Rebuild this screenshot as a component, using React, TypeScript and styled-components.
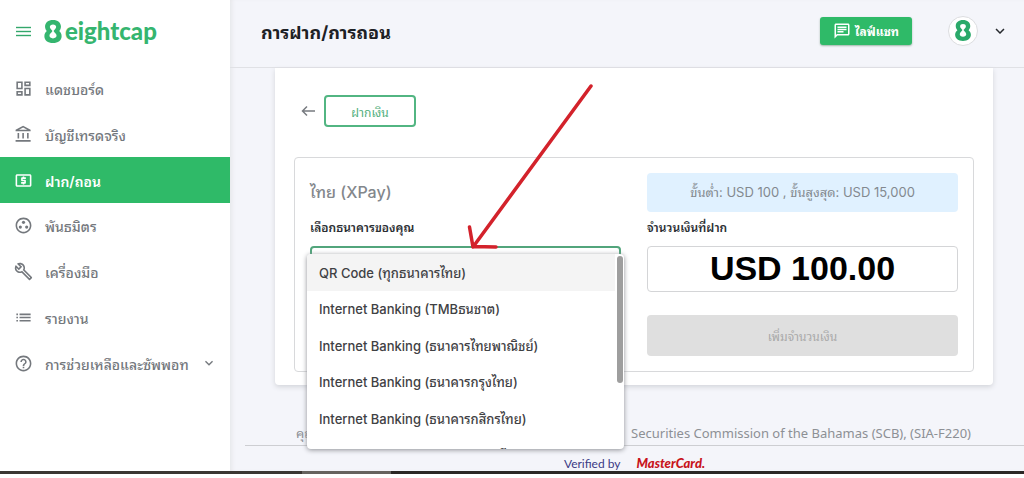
import React from "react";
import styled, { createGlobalStyle } from "styled-components";
import {
  MdKeyboardArrowDown,
  MdOutlineAccountBalance,
  MdOutlineBuild,
  MdOutlineChat,
  MdOutlineDashboard,
  MdOutlineGroupWork,
  MdOutlineHelpOutline,
  MdOutlineList,
  MdOutlineLocalAtm,
} from "react-icons/md";

const green = "#2fba68";
const thai = `"Noto Sans Thai Looped", Tahoma, Waree, Loma, Garuda, "Noto Sans Thai"`;
const sans = `Inter, ${thai}, "Noto Sans", sans-serif`;

const GlobalStyle = createGlobalStyle`
  * { box-sizing: border-box; }
  body { margin: 0; background: #fff; font-family: ${sans}; font-size: 13px; color: #2b2f33; }
  button, input, select { font-family: inherit; }
  h1, h2, p, ul { margin: 0; padding: 0; }
  ul { list-style: none; }
`;

const Page = styled.div`
  display: flex;
  flex-direction: column;
  height: 100vh;
  padding-bottom: 4px;
`;

const Shell = styled.div`
  flex: 1;
  min-height: 0;
  display: grid;
  grid-template-columns: 230px minmax(0, 1fr);
  overflow: hidden;
`;

const ScreenEdge = styled.div`
  height: 3px;
  background: linear-gradient(90deg, #3b3733 0 302px, #66635f 302px 391px, #2b2725 391px);
`;

const Sidebar = styled.aside`
  background: #fff;
`;

const Brand = styled.div`
  display: flex;
  align-items: center;
  height: 66px;
  padding: 0 0 4px 16px;
  gap: 13px;
`;

const IconButton = styled.button<{ $color: string }>`
  display: flex;
  align-items: center;
  justify-content: center;
  padding: 0;
  border: 0;
  background: none;
  color: ${(p) => p.$color};
  cursor: pointer;
`;

const Logo = styled.a`
  display: flex;
  align-items: center;
  gap: 3px;
  color: #35b56f;
  font: 900 24px/26px Lato, sans-serif;
  text-decoration: none;
`;

const Nav = styled.nav`
  display: grid;
  grid-auto-rows: 1fr;
  height: 320px;
`;

const NavItem = styled.a<{ $active?: boolean }>`
  display: flex;
  align-items: center;
  gap: 12px;
  padding-left: 14px;
  font-size: 14px;
  font-weight: ${(p) => (p.$active ? 600 : 500)};
  text-decoration: none;
  color: ${(p) => (p.$active ? "#fff" : "#74787d")};
  background: ${(p) => (p.$active ? green : "transparent")};
`;

const Main = styled.main`
  background: #f4f5fa;
  box-shadow: inset 4px 0 4px -2px #e6e7ea;
`;

const Header = styled.header`
  display: flex;
  align-items: center;
  height: 68px;
  padding: 0 15px 6px 31px;
  border-bottom: 1px solid #e0e1e5;
`;

const Title = styled.h1`
  flex: 1;
  font-size: 18px;
  font-weight: 700;
  color: #1d2125;
`;

const ChatButton = styled.button`
  display: flex;
  align-items: center;
  justify-content: center;
  gap: 4px;
  width: 92px;
  height: 28px;
  padding: 0;
  border: 0;
  border-radius: 3px;
  background: ${green};
  box-shadow: 0 1px 2px #9fb5a8;
  color: #fff;
  font-size: 12px;
  font-weight: 700;
`;

const Avatar = styled.span`
  display: flex;
  align-items: center;
  justify-content: center;
  width: 30px;
  height: 30px;
  margin: 0 13px 0 36px;
  border: 1px solid #dcdde0;
  border-radius: 50%;
  background: #fff;
  color: #2aa96a;
`;

const Card = styled.section`
  position: relative;
  margin: 0 31px 0 45px;
  padding: 27px 19px 13px;
  background: #fff;
  border-radius: 0 0 4px 4px;
  box-shadow: 0 2px 5px #d3d5da;
`;

const BackRow = styled.div`
  display: flex;
  align-items: center;
  gap: 8px;
  padding-left: 7px;
  margin-bottom: 30px;
`;

const DepositTab = styled.button`
  width: 92px;
  height: 32px;
  padding: 0;
  border: 2px solid #52b582;
  border-radius: 4px;
  background: #fff;
  color: #4fae7c;
  font-size: 12px;
`;

const Panel = styled.form`
  display: grid;
  grid-template-columns: 1fr 1fr;
  gap: 26px;
  padding: 15px;
  border: 1px solid #d8d9db;
  border-radius: 4px;
`;

const Column = styled.div`
  position: relative;
  display: flex;
  flex-direction: column;
`;

const Method = styled.h2`
  height: 39px;
  line-height: 39px;
  font-size: 16px;
  font-weight: 500;
  color: #83878c;
`;

const Limits = styled.p`
  height: 39px;
  line-height: 39px;
  border-radius: 4px;
  background: #e0f1ff;
  color: #83898f;
  font-size: 13px;
  text-align: center;
`;

const Label = styled.label`
  height: 34px;
  line-height: 32px;
  font-size: 12px;
  font-weight: 600;
`;

const BankSelect = styled.select`
  appearance: none;
  width: 100%;
  height: 46px;
  padding: 0 12px;
  border: 2px solid #52a57c;
  border-radius: 4px;
  background: #fff;
`;

const Amount = styled.input`
  width: 100%;
  height: 46px;
  padding: 0 0 2px;
  border: 1px solid #d4d5d7;
  border-radius: 4px;
  background: #fff;
  color: #000;
  text-align: center;
  && { font: 700 34px/42px "Liberation Sans", Arial, sans-serif; }
`;

const Submit = styled.button`
  height: 41px;
  margin-top: 23px;
  padding: 0;
  border: 0;
  border-radius: 4px;
  background: #dfdfdf;
  color: #a9a9a9;
  font-size: 12px;
`;

const Menu = styled.div`
  position: absolute;
  top: 81px;
  left: -3px;
  right: -3px;
  height: 195px;
  overflow: hidden;
  border-radius: 4px;
  background: #fff;
  box-shadow: 0 1px 5px #8d8f94;
`;

const Options = styled.ul`
  display: grid;
  grid-auto-rows: 1fr;
  height: 219px;
`;

const Option = styled.li`
  display: flex;
  align-items: center;
  padding-left: 12px;
  margin-right: 9px;
  font-weight: 500;
  color: #3f4144;

  &[aria-selected="true"] {
    background: #f4f4f4;
  }
`;

const Thumb = styled.span`
  position: absolute;
  top: 2px;
  right: 1px;
  width: 6px;
  height: 127px;
  border-radius: 3px;
  background: #9e9e9e;
`;

const Pointer = styled.svg`
  position: absolute;
  top: 12px;
  left: 190px;
  pointer-events: none;
`;

const Footer = styled.footer`
  margin-left: 15px;
  padding-top: 39px;
`;

const Notice = styled.p`
  display: flex;
  justify-content: space-between;
  height: 22px;
  padding: 0 53px 0 51px;
  font-family: "Noto Sans", ${thai}, sans-serif;
  line-height: 18px;
  white-space: nowrap;
  color: #8d9095;
  border-bottom: 1px solid #cdced2;
`;

const Badges = styled.div`
  display: flex;
  justify-content: center;
  gap: 16px;
  padding-top: 10px;
  line-height: 15px;
`;

const Verified = styled.span`
  color: #3b3a85;
  font-family: Lato, sans-serif;
  font-size: 12px;
`;

const MasterCard = styled.span`
  color: #c8141c;
  font: italic 900 13px/15px Lato, sans-serif;
`;

const EightMark = ({ width, height }: { width: number; height: number }) => (
  <svg width={width} height={height} viewBox="0 0 18 24" aria-hidden="true">
    <path
      fill="currentColor"
      fillRule="evenodd"
      d="M9 0C4 0 .7 2.800.7 6.800c0 2 .7 3.600 1.900 4.800C.9 12.900 0 14.700 0 16.900 0 21.200 3.600 24 9 24s9-2.800 9-7.100c0-2.200-.9-4-2.600-5.300 1.200-1.200 1.900-2.800 1.900-4.800C17.300 2.800 14 0 9 0Zm0 4.600c1.900 0 3.300 1 3.300 2.700 0 1.600-1.800 2.500-2.700 4.200.9 1.900 3.100 2.900 3.100 4.800 0 1.800-1.500 2.900-3.700 2.900s-3.700-1.100-3.700-2.900c0-1.900 2.200-2.900 3.100-4.800-.9-1.700-2.700-2.600-2.700-4.200 0-1.700 1.400-2.700 3.300-2.700Z"
    />
  </svg>
);

const navItems = [
  { label: "แดชบอร์ด", Icon: MdOutlineDashboard },
  { label: "บัญชีเทรดจริง", Icon: MdOutlineAccountBalance },
  { label: "ฝาก/ถอน", Icon: MdOutlineLocalAtm, active: true },
  { label: "พันธมิตร", Icon: MdOutlineGroupWork },
  { label: "เครื่องมือ", Icon: MdOutlineBuild },
  { label: "รายงาน", Icon: MdOutlineList },
  { label: "การช่วยเหลือและซัพพอท", Icon: MdOutlineHelpOutline, expandable: true },
];

const banks = [
  "QR Code (ทุกธนาคารไทย)",
  "Internet Banking (TMBธนชาต)",
  "Internet Banking (ธนาคารไทยพาณิชย์)",
  "Internet Banking (ธนาคารกรุงไทย)",
  "Internet Banking (ธนาคารกสิกรไทย)",
  "Internet Banking (ธนาคารกรุงศรี)",
];

export default function App() {
  return (
    <>
      <GlobalStyle />
      <Page>
        <Shell>
          <Sidebar>
            <Brand>
              <IconButton type="button" $color="#35a76b" aria-label="Menu">
                <svg width="15" height="11" viewBox="0 0 15 11" fill="currentColor">
                  <path d="M0 1h15v1H0zM0 5h15v1H0zM0 9h15v1H0z" stroke="currentColor" strokeWidth=".4" />
                </svg>
              </IconButton>
              <Logo href="#">
                <EightMark width={18} height={23} />
                eightcap
              </Logo>
            </Brand>
            <Nav>
              {navItems.map(({ label, Icon, active, expandable }) => (
                <NavItem key={label} href="#" $active={active}>
                  <Icon size={19} />
                  {label}
                  {expandable && <MdKeyboardArrowDown size={16} />}
                </NavItem>
              ))}
            </Nav>
          </Sidebar>
          <Main>
            <Header>
              <Title>การฝาก/การถอน</Title>
              <ChatButton type="button">
                <MdOutlineChat size={18} />
                ไลฟ์แชท
              </ChatButton>
              <Avatar>
                <EightMark width={16} height={21} />
              </Avatar>
              <IconButton type="button" $color="#26292d" aria-label="Account">
                <MdKeyboardArrowDown size={18} />
              </IconButton>
            </Header>
            <Card>
              <BackRow>
                <IconButton type="button" $color="#777b80" aria-label="Back">
                  <svg width="15" height="12" viewBox="0 0 15 12" fill="none" stroke="currentColor" strokeWidth="1.5">
                    <path d="M14 6H1.500M6 1.500 1.500 6 6 10.500" />
                  </svg>
                </IconButton>
                <DepositTab type="button">ฝากเงิน</DepositTab>
              </BackRow>
              <Panel>
                <Column>
                  <Method>ไทย (XPay)</Method>
                  <Label htmlFor="bank">เลือกธนาคารของคุณ</Label>
                  <BankSelect id="bank">
                    {banks.map((b) => (
                      <option key={b}>{b}</option>
                    ))}
                  </BankSelect>
                  <Menu>
                    <Options role="listbox" aria-label="เลือกธนาคารของคุณ">
                      {banks.map((b, i) => (
                        <Option key={b} role="option" aria-selected={i === 0}>
                          {b}
                        </Option>
                      ))}
                    </Options>
                    <Thumb />
                  </Menu>
                </Column>
                <Column>
                  <Limits>ขั้นต่ำ: USD 100 , ขั้นสูงสุด: USD 15,000</Limits>
                  <Label htmlFor="amount">จำนวนเงินที่ฝาก</Label>
                  <Amount id="amount" defaultValue="USD 100.00" />
                  <Submit type="button" disabled>
                    เพิ่มจำนวนเงิน
                  </Submit>
                </Column>
              </Panel>
              <Pointer width="132" height="174" viewBox="0 0 132 174" fill="none" stroke="#d3222b" strokeWidth="3.500" strokeLinecap="round">
                <path d="M126 6 8 167M4.500 147 8 167M8 166.500 31 167" />
              </Pointer>
            </Card>
            <Footer>
              <Notice>
                <span>คุณกำลังเปิดบัญชีกับ</span>
                <span>Securities Commission of the Bahamas (SCB), (SIA-F220)</span>
              </Notice>
              <Badges>
                <Verified>Verified by</Verified>
                <MasterCard>MasterCard.</MasterCard>
              </Badges>
            </Footer>
          </Main>
        </Shell>
        <ScreenEdge />
      </Page>
    </>
  );
}
